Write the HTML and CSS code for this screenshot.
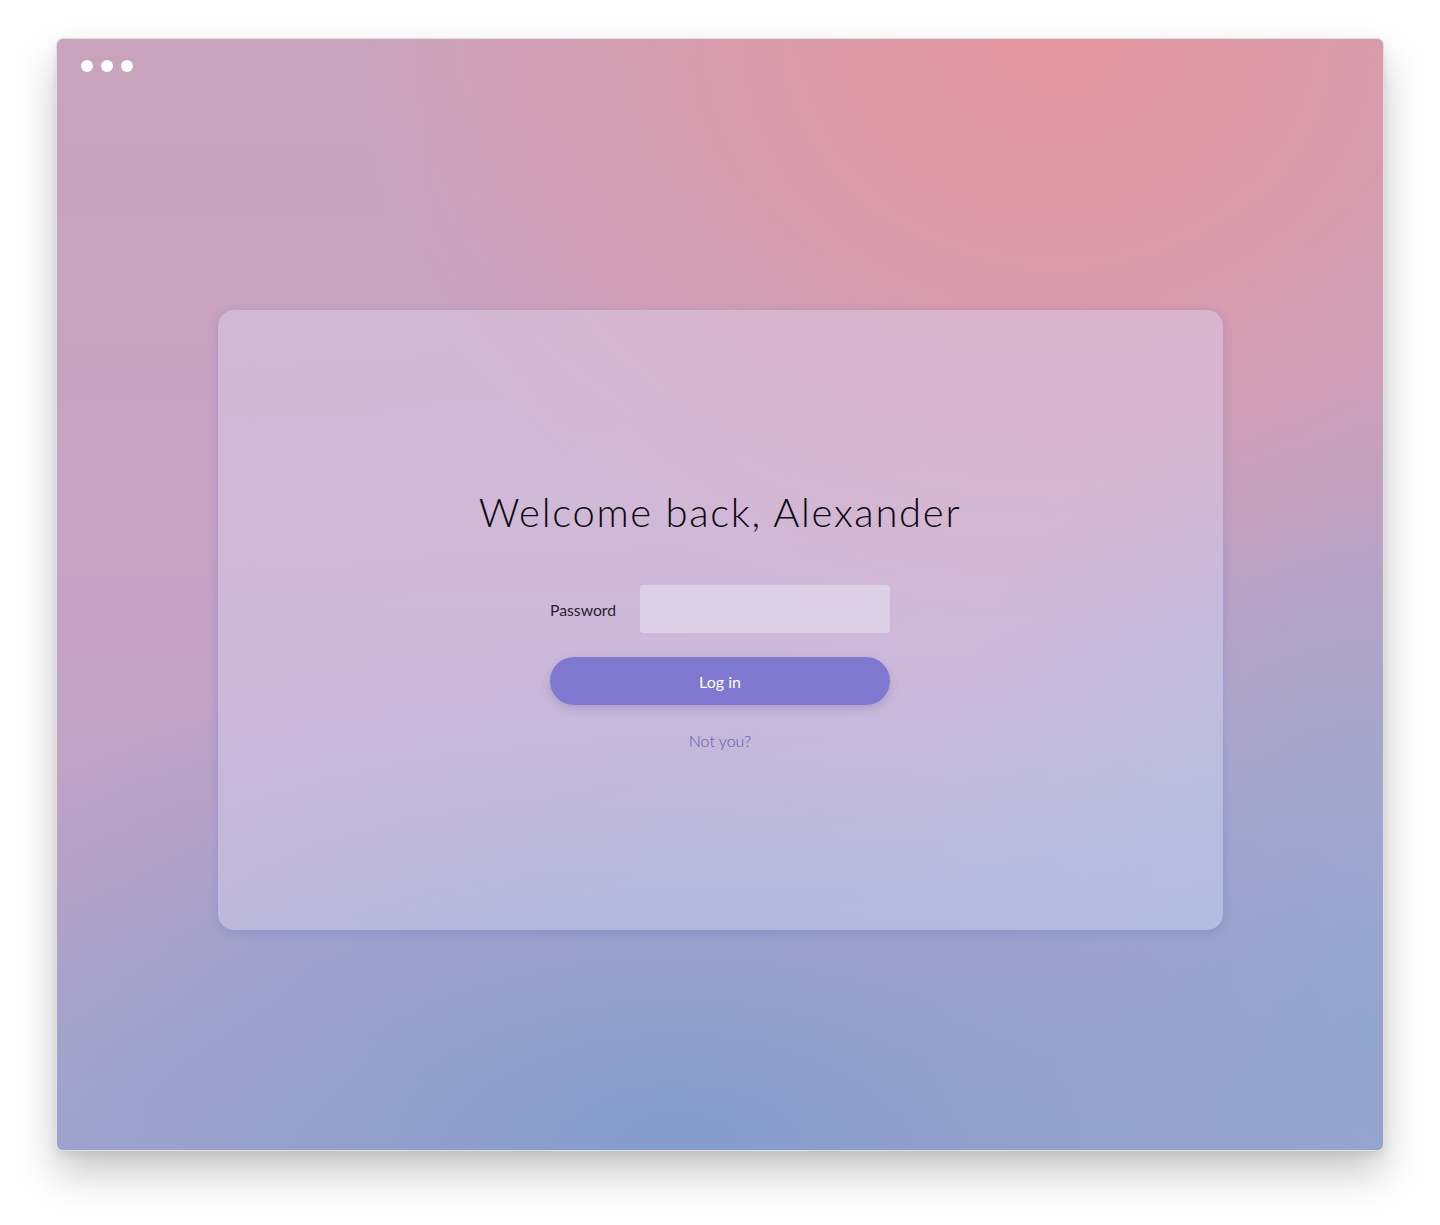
FILE: index.html
```html
<!DOCTYPE html>
<html lang="en">
<head>
<meta charset="utf-8">
<title>Welcome back</title>
<link rel="stylesheet" href="styles.css">
</head>
<body>
<div class="page">
  <div class="window">
    <div class="dots"><span class="dot"></span><span class="dot"></span><span class="dot"></span></div>
    <div class="card">
      <h1 class="title">Welcome back, Alexander</h1>
      <form class="form">
        <div class="field">
          <label class="label" for="pw">Password</label>
          <input class="input" id="pw" type="password">
        </div>
        <button class="btn" type="button">Log in</button>
        <a class="link" href="#">Not you?</a>
      </form>
    </div>
  </div>
</div>
</body>
</html>
```

FILE: styles.css
```css
* { box-sizing: border-box; }
html, body { margin: 0; padding: 0; background: #ffffff; }
body { font-family: Lato, "Open Sans", sans-serif; }

.page {
  padding: 38px 56px 74px 56px;
}

.window {
  width: 1328px;
  height: 1113px;
  border-radius: 7px;
  border: 1px solid rgba(0, 0, 0, 0.12);
  background-clip: padding-box;
  box-shadow: 0 22px 40px rgba(0, 0, 0, 0.22), 0 4px 10px rgba(0, 0, 0, 0.08);
  padding: 21px 24px;
  overflow: hidden;
  background-image:
    radial-gradient(ellipse 700px 600px at 1000px 0px, rgba(228, 150, 158, 1) 0%, rgba(222, 152, 165, 0.7) 45%, rgba(210, 155, 175, 0) 100%),
    radial-gradient(ellipse 900px 520px at 620px 1113px, rgba(133, 156, 204, 1) 0%, rgba(140, 158, 205, 0.6) 50%, rgba(150, 160, 205, 0) 100%),
    radial-gradient(ellipse 500px 700px at 1328px 1000px, rgba(148, 168, 208, 1) 0%, rgba(148, 168, 208, 0) 100%),
    linear-gradient(to bottom, #c9a3bb 0%, #c7a2c3 45%, #bca3c8 75%, #a8a6cc 100%);
}

.dots {
  display: flex;
  gap: 8px;
  height: 12px;
}
.dot {
  width: 12px;
  height: 12px;
  border-radius: 50%;
  background: #ffffff;
}

.card {
  width: 1005px;
  height: 620px;
  margin: 238px auto 0;
  border-radius: 16px;
  background: linear-gradient(160deg, rgba(222, 214, 242, 0.42) 0%, rgba(220, 216, 244, 0.42) 60%, rgba(205, 220, 250, 0.45) 100%);
  box-shadow: 0 3px 10px rgba(95, 120, 200, 0.35);
  display: flex;
  flex-direction: column;
  align-items: center;
  padding-top: 178px;
}

.title {
  margin: 0;
  font-family: Lato, sans-serif;
  font-weight: 300;
  font-size: 40px;
  line-height: 48px;
  letter-spacing: 1.7px;
  color: #0d0a12;
}

.form {
  width: 340px;
  margin-top: 49px;
  display: flex;
  flex-direction: column;
  align-items: center;
}

.field {
  width: 100%;
  display: flex;
  align-items: center;
  justify-content: space-between;
}

.label {
  font-size: 15.75px;
  color: #2a2232;
}

.input {
  width: 250px;
  height: 48px;
  border: none;
  border-radius: 4px;
  background: rgba(232, 228, 244, 0.55);
  outline: none;
}

.btn {
  margin-top: 24px;
  width: 340px;
  height: 48px;
  border: none;
  border-radius: 24px;
  background: #7e78d0;
  color: #ffffff;
  font-family: Lato, sans-serif;
  font-size: 16px;
  box-shadow: 0 4px 10px rgba(80, 70, 160, 0.22);
}

.link {
  margin-top: 26px;
  font-family: Lato, sans-serif;
  font-weight: 300;
  font-size: 16px;
  line-height: 20px;
  color: #5c56aa;
  text-decoration: none;
}
```
